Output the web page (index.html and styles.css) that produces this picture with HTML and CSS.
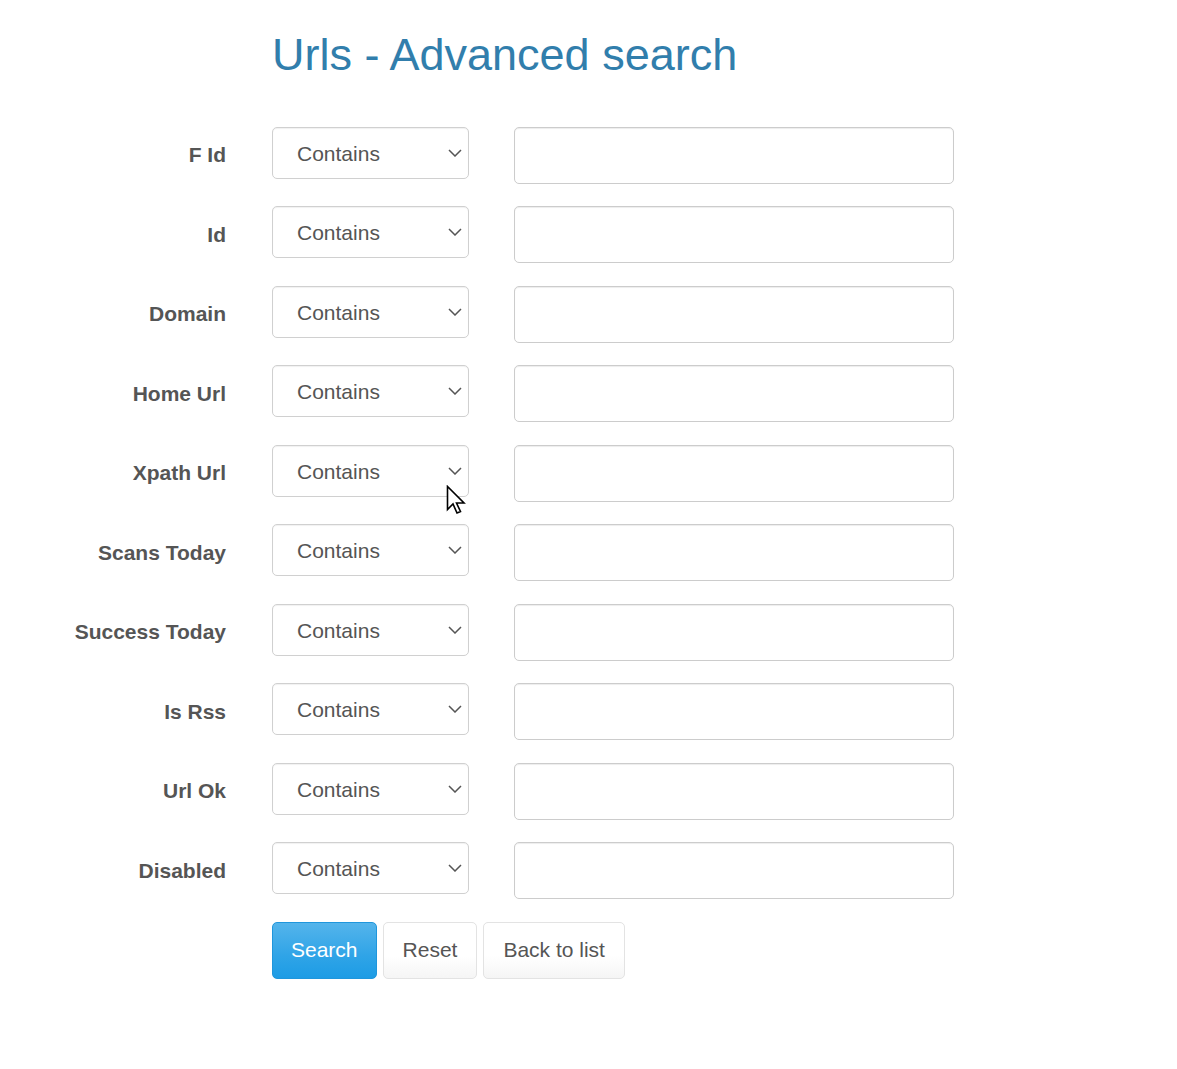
FILE: index.html
```html
<!DOCTYPE html>
<html lang="en">
<head>
    <meta charset="UTF-8">
    <title>Urls - Advanced search</title>
    <link rel="stylesheet" href="styles.css">
</head>
<body>

<div class="page">
    <h1 class="page-title">Urls - Advanced search</h1>

    <form class="search-form">
        <label class="field-label">F Id</label>
        <span class="select-wrap">
            <select class="field-op"><option>Contains</option></select>
            <svg class="chevron" width="14" height="8" viewBox="0 0 14 8"><path d="M1 1l6 6 6-6" fill="none" stroke="#555" stroke-width="1.5"/></svg>
        </span>
        <input class="field-value" type="text">

        <label class="field-label">Id</label>
        <span class="select-wrap">
            <select class="field-op"><option>Contains</option></select>
            <svg class="chevron" width="14" height="8" viewBox="0 0 14 8"><path d="M1 1l6 6 6-6" fill="none" stroke="#555" stroke-width="1.5"/></svg>
        </span>
        <input class="field-value" type="text">

        <label class="field-label">Domain</label>
        <span class="select-wrap">
            <select class="field-op"><option>Contains</option></select>
            <svg class="chevron" width="14" height="8" viewBox="0 0 14 8"><path d="M1 1l6 6 6-6" fill="none" stroke="#555" stroke-width="1.5"/></svg>
        </span>
        <input class="field-value" type="text">

        <label class="field-label">Home Url</label>
        <span class="select-wrap">
            <select class="field-op"><option>Contains</option></select>
            <svg class="chevron" width="14" height="8" viewBox="0 0 14 8"><path d="M1 1l6 6 6-6" fill="none" stroke="#555" stroke-width="1.5"/></svg>
        </span>
        <input class="field-value" type="text">

        <label class="field-label">Xpath Url</label>
        <span class="select-wrap">
            <select class="field-op"><option>Contains</option></select>
            <svg class="chevron" width="14" height="8" viewBox="0 0 14 8"><path d="M1 1l6 6 6-6" fill="none" stroke="#555" stroke-width="1.5"/></svg>
            <!-- mouse pointer hovering the select -->
            <svg class="pointer" width="22" height="32" viewBox="0 0 22 32"><path d="M1.5 1.5v23l5.5-5.5 4 9 3.5-1.5-4-8.5h7.5z" fill="#fff" stroke="#000" stroke-width="1.6" stroke-linejoin="miter"/></svg>
        </span>
        <input class="field-value" type="text">

        <label class="field-label">Scans Today</label>
        <span class="select-wrap">
            <select class="field-op"><option>Contains</option></select>
            <svg class="chevron" width="14" height="8" viewBox="0 0 14 8"><path d="M1 1l6 6 6-6" fill="none" stroke="#555" stroke-width="1.5"/></svg>
        </span>
        <input class="field-value" type="text">

        <label class="field-label">Success Today</label>
        <span class="select-wrap">
            <select class="field-op"><option>Contains</option></select>
            <svg class="chevron" width="14" height="8" viewBox="0 0 14 8"><path d="M1 1l6 6 6-6" fill="none" stroke="#555" stroke-width="1.5"/></svg>
        </span>
        <input class="field-value" type="text">

        <label class="field-label">Is Rss</label>
        <span class="select-wrap">
            <select class="field-op"><option>Contains</option></select>
            <svg class="chevron" width="14" height="8" viewBox="0 0 14 8"><path d="M1 1l6 6 6-6" fill="none" stroke="#555" stroke-width="1.5"/></svg>
        </span>
        <input class="field-value" type="text">

        <label class="field-label">Url Ok</label>
        <span class="select-wrap">
            <select class="field-op"><option>Contains</option></select>
            <svg class="chevron" width="14" height="8" viewBox="0 0 14 8"><path d="M1 1l6 6 6-6" fill="none" stroke="#555" stroke-width="1.5"/></svg>
        </span>
        <input class="field-value" type="text">

        <label class="field-label">Disabled</label>
        <span class="select-wrap">
            <select class="field-op"><option>Contains</option></select>
            <svg class="chevron" width="14" height="8" viewBox="0 0 14 8"><path d="M1 1l6 6 6-6" fill="none" stroke="#555" stroke-width="1.5"/></svg>
        </span>
        <input class="field-value" type="text">

        <div class="actions">
            <button type="submit" class="btn btn-primary">Search</button>
            <button type="reset" class="btn btn-default">Reset</button>
            <button type="button" class="btn btn-default">Back to list</button>
        </div>
    </form>
</div>

</body>
</html>
```

FILE: styles.css
```css
* {
    box-sizing: border-box;
}

body {
    margin: 0;
    font-family: "Liberation Sans", Arial, sans-serif;
    font-size: 21px;
    color: #555;
    background: #fff;
}

.page {
    padding-top: 30px;
}

.page-title {
    margin: 0 0 47px 272px;
    font-size: 45px;
    font-weight: normal;
    line-height: 1.1;
    color: #317eac;
}

.search-form {
    display: grid;
    grid-template-columns: 226px 197px 440px;
    grid-auto-rows: 57px;
    column-gap: 46px;
    row-gap: 22.5px;
    align-items: center;
}

.search-form > input.field-value {
    margin-left: -1px;
}

.field-label {
    text-align: right;
    font-weight: bold;
    line-height: 1.5;
}

.select-wrap {
    position: relative;
    align-self: start;
    height: 52px;
}

.field-op {
    -webkit-appearance: none;
    appearance: none;
    display: block;
    width: 100%;
    height: 52px;
    margin: 0;
    padding: 1px 30px 0 24px;
    font-family: inherit;
    font-size: 21px;
    color: #555;
    background: #fff;
    border: 1px solid #d0d0d0;
    border-radius: 5px;
    box-shadow: inset 0 1px 1px rgba(0, 0, 0, .06);
}

.chevron {
    position: absolute;
    right: 7px;
    top: 22px;
    pointer-events: none;
}

.pointer {
    position: absolute;
    left: 174px;
    top: 40px;
    pointer-events: none;
}

.field-value {
    display: block;
    width: 440px;
    height: 57px;
    margin: 0;
    padding: 0 16px;
    font-family: inherit;
    font-size: 21px;
    color: #555;
    background: #fff;
    border: 1px solid #ccc;
    border-radius: 5px;
    box-shadow: inset 0 1px 1px rgba(0, 0, 0, .075);
}

.actions {
    grid-column: 2 / 4;
    font-size: 0;
}

.btn {
    display: inline-block;
    vertical-align: top;
    height: 57px;
    margin: 0 6px 0 0;
    padding: 0 18px;
    font-family: inherit;
    font-size: 21px;
    border-radius: 5px;
    cursor: pointer;
}

.btn-primary {
    color: #fff;
    background-image: linear-gradient(#54b4eb, #2fa4e7 60%, #1d9ce5);
    border: 1px solid #1f96dc;
}

.btn-default {
    padding: 0 19px;
    color: #555;
    background-image: linear-gradient(#fff, #fff 60%, #f5f5f5);
    border: 1px solid #e3e3e3;
}
```
